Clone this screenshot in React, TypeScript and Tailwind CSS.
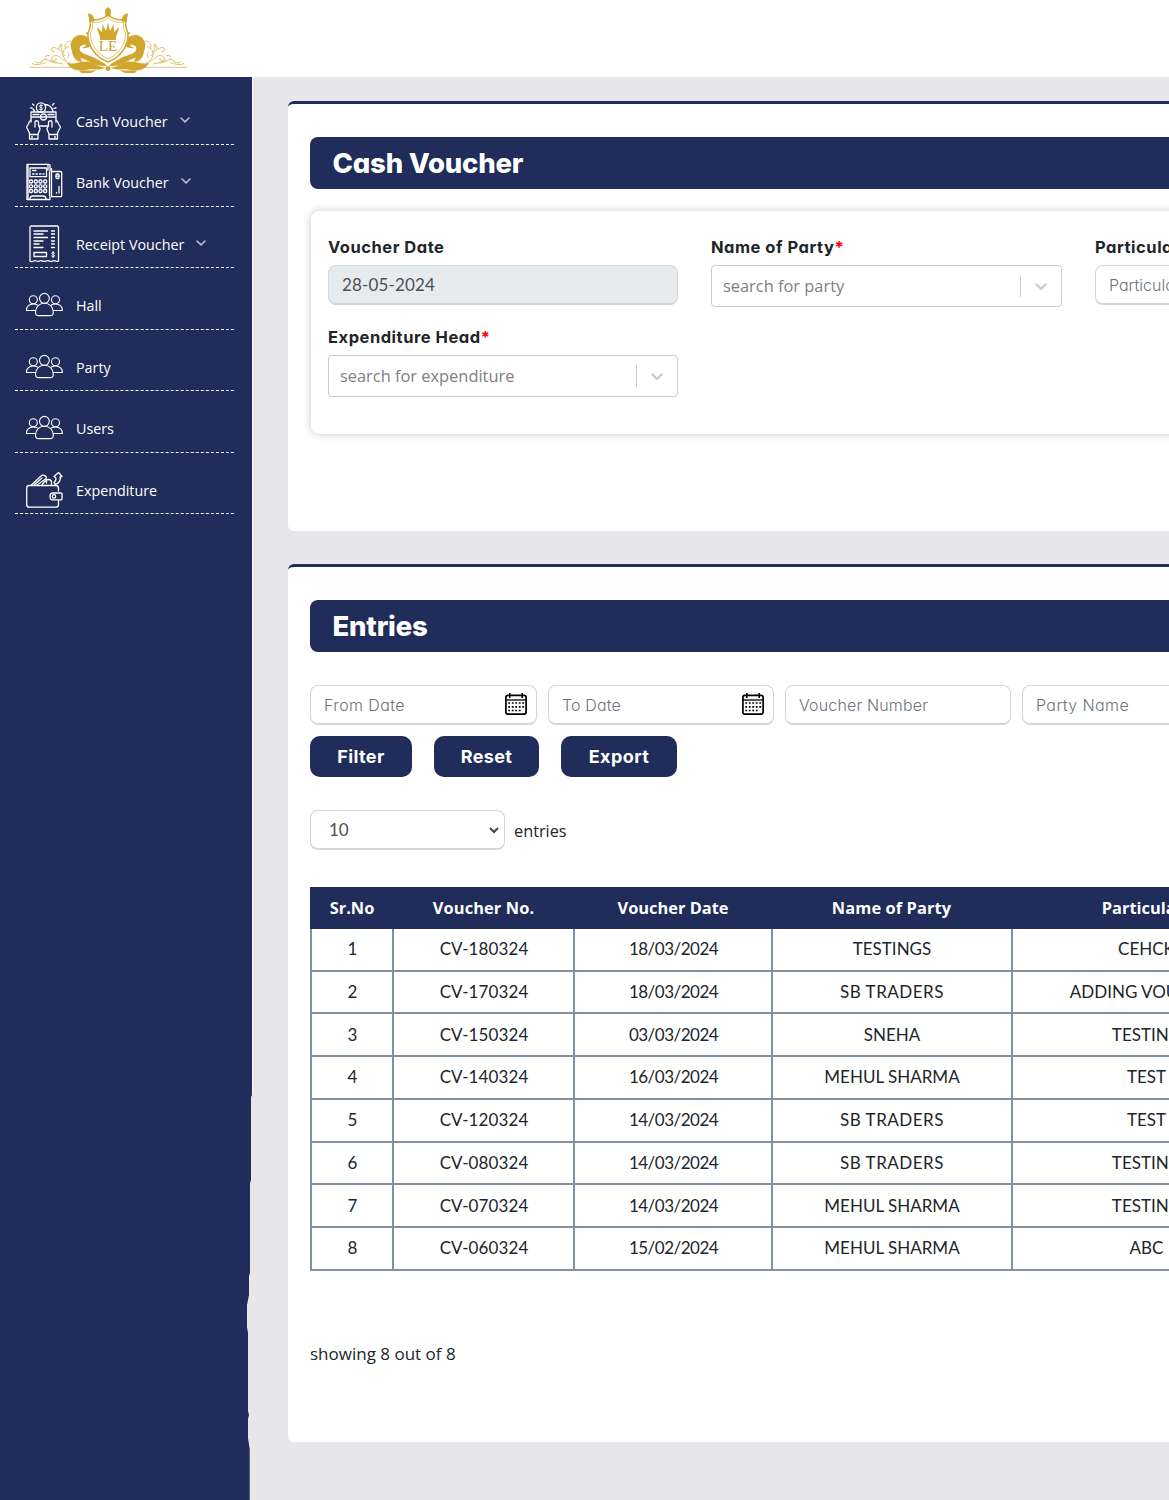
import type { ReactNode } from 'react'

const muli = "font-['Inter','Lato',sans-serif] [font-feature-settings:'cv11']"
const lato = "font-['Lato',sans-serif]"
const segoe = "font-['Open_Sans','Noto_Sans',sans-serif]"

function Logo() {
  const side = (
    <g>
      {/* large acanthus scroll */}
      <path
        d="M62 44 C61 37 56 32.500 50 33 C43 33.500 40 40 41 46 C42 53 49 55 56 58 C62 60.500 68 65 77 64 C74 60 69 59 65 56 C60 53 53 53 50 48.500 C48.500 45 52 42 56 43 C55 45 53 45 52 46 C56 47.500 59 44 62 44 Z"
        fill="#d0a72c"
      />
      <path d="M42 50 C46 51 51 54 52 60 C47 60 43 56 42 50 Z" fill="#d0a72c" />
      <path d="M37 61 C45 63 52 58 60 60 C66 61.500 69 65 75 65.500 C70 69 63 66.500 58 67.500 C53 69.500 42 70 37 61 Z" fill="#d0a72c" />
      <path d="M49 69.500 C54 67 60 70 66 67.500 C63 72 54 73 49 69.500 Z" fill="#d0a72c" />
      <g fill="none" stroke="#d0a72c" strokeWidth="1" opacity="0.7">
        <path d="M40 61 C32 59 31 54 26 53.500 C21 53.500 20 58 24 58.500 C26.500 58.500 27 56 25 56" />
        <path d="M37 59 C30 54 33 46 39 44.500 M36 47 C34 43 36 39 40 39 C42 39 42 42 40 42" />
        <path d="M35 54 C31 49 26 44 22 46 C20 48 23 51 25 49" />
        <path d="M27 61 C20 61 17 56 13 58 C10 60 14 63 15.500 60.500 M13 58 C10 62 6 61 5 59.500" />
        <path d="M33 50 C30 46 32 43 30 41 M20 54 C16 52 13 56 17 57.500 M29 47 C28 43 32 42 33 44" />
        <path d="M33 62 C28 61 24 60 20 58.500 M12 61.500 C9 63 5 63 2 61.500 M37 56 C40 54 39 50 37 50" />
      </g>
    </g>
  )
  return (
    <svg width="160" height="68" viewBox="0 0 160 68" className="block">
      <g transform="translate(0,-3)">
        {side}
        <g transform="translate(156,0) scale(-1,1)">{side}</g>
        <path d="M-1 65.300 H44 M112 65.300 H157" stroke="#d0a72c" strokeWidth="0.8" opacity="0.8" />
        <path
          d="M60 17 C66 19 74 17 78 13 C82 17 90 19 96 17 C95 23 96 27 98 31 C99 43 91 55 78 60 C65 55 57 43 58 31 C60 27 61 23 60 17 Z"
          fill="#fff"
          stroke="#d0a72c"
          strokeWidth="1.600"
        />
        <path
          d="M62.500 20 C68 21 74 19.500 78 16 C82 19.500 88 21 93.500 20 C93 25 94 28 95.500 31 C96 42 89 52 78 57 C67 52 60 42 60.500 31 C62 28 63 25 62.500 20 Z"
          fill="none"
          stroke="#d0a72c"
          strokeWidth="0.700"
        />
        <path d="M76 14 L75.500 8.500 C76 5 80 5 80.500 8.500 L80 14 Z M58.500 12 C61.500 11.500 64 15 64 19 L60 19.500 Z M97.500 12 C94.500 11.500 92 15 92 19 L96 19.500 Z" fill="#d0a72c" stroke="#d0a72c" />
        <path d="M70 35 L66.500 25 L72 30 L72.500 22.500 L76 29 L78 20.500 L80 29 L83.500 22.500 L84 30 L89.500 25 L86 35 Z M70 35 H86 V38 H70 Z" fill="#d0a72c" />
        <circle cx="78" cy="66.500" r="2.500" fill="#d0a72c" />
        <circle cx="57" cy="31" r="1" fill="#d0a72c" />
        <circle cx="99" cy="31" r="1" fill="#d0a72c" />
        <text x="78" y="48.500" textAnchor="middle" fontFamily="Liberation Serif" fontSize="15" fill="#c9a02a">
          LE
        </text>
      </g>
    </svg>
  )
}

const icon = {
  width: 38,
  height: 38,
  viewBox: '0 0 38 38',
  fill: 'none',
  stroke: '#fff',
  strokeWidth: 1.3,
  strokeLinecap: 'round' as const,
  strokeLinejoin: 'round' as const,
}

const CashIcon = () => (
  <svg {...icon}>
    <circle cx="16" cy="5.500" r="4.600" />
    <path d="M17.700 3.800 C16.500 2.800 14.300 3.200 14.500 4.500 C14.700 5.700 17.500 5.300 17.600 6.700 C17.600 8 15.300 8.200 14.300 7.200 M16 2.500 V8.600" strokeWidth="0.900" />
    <path d="M19.500 2.500 C24 2.500 27 5 28 9.500 M8 7 L9.500 9 M7.500 2 L9 3.200 M27.500 3 L29 1.500 M29 6.500 L31 6 M7 6 L5.500 5.800" />
    <path d="M6 10 H31 V15 H6 Z M8 12.500 H14 M23 12.500 H29 M6 15 H15.500 M21.500 15 H31 M6 15 V20 M31 15 V20" />
    <circle cx="18.500" cy="15" r="3" />
    <path d="M14 24 H23" />
    <path d="M6 18 C4 19 4 20 3.500 22 L1.500 25 L4.500 31 V37 H13 V32.500 C13 30.500 15 29 15 26.500 L13.500 23.500 V20 C13 18.300 10 18.300 10 20 V25" />
    <path d="M31 18 C33 19 33 20 33.500 22 L35.500 25 L32.500 31 V37 H24 V32.500 C24 30.500 22 29 22 26.500 L23.500 23.500 V20 C24 18.300 27 18.300 27 20 V25" />
    <path d="M5 32.500 H12.500 M24.500 32.500 H32 M6.500 35 H7.500 M29.500 35 H30.500" />
  </svg>
)

const BankIcon = () => (
  <svg {...icon}>
    <path d="M25 8 V2.500 C25 1.800 24.500 1.300 23.800 1.300 H2 V36.500 H25 V34" />
    <path d="M5 5 H21.500 V13.700 H5 Z M7.500 7.500 H11 M7.500 11 H9 M11 11 H12.500 M14.500 11 H16 M18 11 H19 M3 1.500 V36 M23 2 V7" />
    {[17.5, 22.3, 27].map((y) =>
      [4.500, 9.300, 14, 18.700].map((x) => <rect key={`${x}-${y}`} x={x} y={y - 0.5} width="3" height="3" rx="1" />),
    )}
    <path d="M5 36 C5 33.500 6 33 8 33 H18 C20 33 21 33.500 21 36" />
    <path d="M26.500 8.500 H35.500 C36.300 8.500 36.700 9 36.700 9.700 V32.500 C36.700 33.300 36.200 33.700 35.500 33.700 H26.500 Z M24.500 9 V33 M26.500 5.500 V8" />
    <rect x="31" y="11" width="3" height="4.500" rx="1" />
    <path d="M31 13.200 H34 M34 23.500 V30 M31.500 29.500 V30" />
  </svg>
)

const ReceiptIcon = () => (
  <svg {...icon}>
    <path d="M5 36 V2.500 C5 1.500 5.500 1 6.500 1 H32 C33 1 33.500 1.500 33.500 2.500 V36 C31.500 37.500 30 34.500 27.500 36 C25.500 37.500 23.500 34.500 21 36 C19 37.500 17 34.500 14.500 36 C12.500 37.500 10.500 34.500 8.500 36 C7 37 6 37 5 36 Z" />
    <path d="M9 6 H22.500 M9 9 H18 M9 12.500 H22.500 M9 16 H18 M9 19 H14 M9 22.500 H18" />
    <path d="M26.500 6 H29.500 M26.500 9 H29.500 M26.500 12.500 H29.500 M26.500 16 H29.500 M26.500 19 H29.500 M26.500 22.500 H29.500" />
    <rect x="9" y="27.500" width="12.500" height="4" />
    <path d="M29.500 28 C28.500 27 26.500 27.200 26.700 28.500 C27 29.700 29.500 29.300 29.600 30.700 C29.500 32 27.300 32 26.500 31 M28.100 26.500 V32.700" strokeWidth="1" />
  </svg>
)

const PeopleIcon = () => (
  <svg {...icon} strokeWidth={1.1}>
    <circle cx="19.400" cy="12.300" r="4.900" />
    <circle cx="8.300" cy="13.800" r="4" />
    <circle cx="30.500" cy="13.800" r="4" />
    <path d="M10.500 26.500 C10.500 20.500 14.500 17.300 19.400 17.300 C24.300 17.300 28.300 20.500 28.300 26.500 C28.300 28.600 27.500 29.600 25 29.600 H13.800 C11.300 29.600 10.500 28.600 10.500 26.500 Z" />
    <path d="M10.500 24.500 H1.500 C1.300 20.800 3.800 18 8.300 18 C10 18 11.300 18.300 12.400 19 M28.300 24.500 H37.300 C37.500 20.800 35 18 30.500 18 C28.800 18 27.500 18.300 26.400 19" />
  </svg>
)

const WalletIcon = () => (
  <svg {...icon}>
    <path d="M33.500 20 V17.500 C33.500 16 32.500 14.500 31 14.500 H4 C2.500 14.500 1.700 15.500 1.700 17 V33.500 C1.700 35.200 2.700 36.200 4.300 36.200 H31 C32.700 36.200 33.500 35.200 33.500 33.500 V29.500" />
    <path d="M28 22 H36 C36.700 22 37 22.400 37 23 V27.700 C37 28.500 36.700 28.900 36 28.900 H28 C26 28.900 25 27.400 25 25.400 C25 23.400 26 22 28 22 Z" />
    <circle cx="29" cy="25.400" r="1.700" />
    <path d="M6.500 14 L16 5 C17.500 3.500 20.500 4 21.500 6.500 L20.500 8 L12 14 M17 14 C18 12 21 8.500 23.500 8.500 C25.500 8.500 26.500 10 26.500 11.500 V14 M9.500 13.500 L17 7 M21.500 8.500 V12" />
    <path d="M30.500 13.500 L29 11.500 C30.500 10 31.500 8 30.500 6.500 L29 5.500 L33.500 1.500 L37 5.500 L35 6 C36 8.500 34.500 12 30.500 13.500 Z" />
  </svg>
)

const Chevron = () => (
  <svg width="10" height="6" viewBox="0 0 10 6" fill="none" stroke="#b9bccb" strokeWidth="1.600" strokeLinecap="round" className="relative -top-px">
    <path d="M1 1 L5 4.800 L9 1" />
  </svg>
)

const menu: { label: string; icon: ReactNode; open?: boolean }[] = [
  { label: 'Cash Voucher', icon: <CashIcon />, open: true },
  { label: 'Bank Voucher', icon: <BankIcon />, open: true },
  { label: 'Receipt Voucher', icon: <ReceiptIcon />, open: true },
  { label: 'Hall', icon: <PeopleIcon /> },
  { label: 'Party', icon: <PeopleIcon /> },
  { label: 'Users', icon: <PeopleIcon /> },
  { label: 'Expenditure', icon: <WalletIcon /> },
]

function Sidebar() {
  return (
    <aside className="relative h-[1423px] w-[253px] shrink-0">
      <div className="absolute top-0 right-0 h-[1018px] w-px bg-white" />
      <nav className="h-full w-[252px] bg-[#202c59] pt-[6.8px] pr-[18px] pl-[15px] [clip-path:polygon(0_0,252px_0,252px_1018px,251px_1020px,251px_1103px,250px_1106px,250px_1196px,249px_1199px,249px_1218px,247px_1228px,247px_1250px,248px_1256px,248px_1334px,249px_1338px,248px_1342px,248px_1361px,249.7px_1372px,249.7px_1423px,0_1423px)]">
        {menu.map((m) => (
          <a key={m.label} className="flex h-[61.5px] items-center border-b border-dashed border-white pt-[13px] pl-[10px]">
            {m.icon}
            <span className={`ml-[13px] pt-[3px] text-[14.300px] leading-none text-white ${segoe}`}>{m.label}</span>
            {m.open && (
              <span className="ml-[12px]">
                <Chevron />
              </span>
            )}
          </a>
        ))}
      </nav>
    </aside>
  )
}

function Card({ title, className, children }: { title: string; className: string; children: ReactNode }) {
  return (
    <section className={`rounded-md border-t-[3px] border-[#202c59] bg-white px-[22px] pt-[33px] ${className}`}>
      <h2 className={`flex h-[52px] items-center rounded-lg bg-[#202c59] pt-[2px] pl-[22.500px] text-[27.500px] font-extrabold tracking-[-0.2px] text-white ${muli}`}>
        {title}
      </h2>
      {children}
    </section>
  )
}

function Label({ children, required }: { children: string; required?: boolean }) {
  return (
    <div className={`h-[30px] text-[16.500px] leading-[24px] font-bold tracking-[0.52px] text-[#212529] ${muli}`}>
      {children}
      {required && <span className="text-[#ff0000]">*</span>}
    </div>
  )
}

const field = 'flex h-10 items-center rounded-lg border border-b-2 border-[#d3d6da] px-[13px]'

function SearchSelect({ text }: { text: string }) {
  return (
    <div className="flex h-[42px] items-center rounded border border-[#cccccc] pl-[11px]">
      <span className={`flex-1 pt-px text-[16.400px] text-[#808080] ${segoe}`}>{text}</span>
      <span className="h-[22px] w-px bg-[#cccccc]" />
      <svg width="20" height="20" viewBox="0 0 20 20" className="mx-[10px]" fill="#cccccc">
        <path d="M4.516 7.548c0.436-0.446 1.043-0.481 1.576 0l3.908 3.747 3.908-3.747c0.533-0.481 1.141-0.446 1.574 0 0.436 0.445 0.408 1.197 0 1.615-0.406 0.418-4.695 4.502-4.695 4.502-0.217 0.223-0.502 0.335-0.787 0.335s-0.570-0.112-0.789-0.335c0 0-4.287-4.084-4.695-4.502s-0.436-1.170 0-1.615z" />
      </svg>
    </div>
  )
}

function CalendarIcon() {
  return (
    <svg width="22" height="22" viewBox="0 0 22 22" fill="none" stroke="#000" strokeWidth="1.700" className="relative -top-px">
      <rect x="0.900" y="2.300" width="20.200" height="18.800" rx="2" />
      <path d="M1 7 H21" strokeWidth="1.300" />
      <path d="M4.800 0 V5 M17.200 0 V5" strokeWidth="1.600" />
      {[10, 13.8, 17.5].map((y) => (
        <path key={y} d={y === 17.5 ? `M3.300 ${y} H16` : `M3.300 ${y} H19.500`} strokeWidth="1.700" strokeDasharray="1.800 1.700" />
      ))}
    </svg>
  )
}

const columns = [
  { label: 'Sr.No', width: 'w-[82px]', head: 'pl-[2px]', cell: 'pl-px' },
  { label: 'Voucher No.', width: 'w-[181px]', head: 'pl-[2px] tracking-[0.1px]', cell: 'tracking-[0.1px] pl-px' },
  { label: 'Voucher Date', width: 'w-[198px]', head: 'pl-[2px]', cell: 'tracking-[-0.5px] pl-px' },
  { label: 'Name of Party', width: 'w-[240px]', head: 'pl-px tracking-[0.1px]', cell: '' },
  { label: 'Particulars', width: 'w-[269px]', head: 'pl-[2px]', cell: '' },
]

const rows = [
  ['1', 'CV-180324', '18/03/2024', 'TESTINGS', 'CEHCK'],
  ['2', 'CV-170324', '18/03/2024', 'SB TRADERS', 'ADDING VOUCHER'],
  ['3', 'CV-150324', '03/03/2024', 'SNEHA', 'TESTING'],
  ['4', 'CV-140324', '16/03/2024', 'MEHUL SHARMA', 'TEST'],
  ['5', 'CV-120324', '14/03/2024', 'SB TRADERS', 'TEST'],
  ['6', 'CV-080324', '14/03/2024', 'SB TRADERS', 'TESTING'],
  ['7', 'CV-070324', '14/03/2024', 'MEHUL SHARMA', 'TESTING'],
  ['8', 'CV-060324', '15/02/2024', 'MEHUL SHARMA', 'ABC'],
]

function Entries() {
  return (
    <Card title="Entries" className="mt-[33px] h-[878px]">
      <div className={`mt-[33px] flex gap-[11px] text-[16px] font-light tracking-[0.15px] text-[#6c757d] ${muli}`}>
        <div className={`${field} w-[227px] justify-between pr-[9px]! tracking-[0.4px]`}>
          From Date <CalendarIcon />
        </div>
        <div className={`${field} w-[226px] justify-between pr-[9px]!`}>
          To Date <CalendarIcon />
        </div>
        <div className={`${field} w-[226px]`}>Voucher Number</div>
        <div className={`${field} w-[226px] tracking-[0.4px]`}>Party Name</div>
      </div>
      <div className={`mt-[11px] flex gap-[22px] text-[18px] font-bold tracking-[0.4px] text-white ${muli}`}>
        <button className="h-[41px] w-[102px] rounded-[10px] bg-[#202c59]">Filter</button>
        <button className="h-[41px] w-[105px] rounded-[10px] bg-[#202c59]">Reset</button>
        <button className="h-[41px] w-[116px] rounded-[10px] bg-[#202c59]">Export</button>
      </div>
      <div className="mt-[33px] flex items-center">
        <div className={`${field} w-[195px] justify-between pt-px pr-[5px]! pl-[18px]! text-[17px] text-[#495057] ${lato}`}>
          10
          <svg width="10" height="7" viewBox="0 0 10 7" fill="none" stroke="#41464b" strokeWidth="2">
            <path d="M1 1 L5 5 L9 1" />
          </svg>
        </div>
        <span className={`ml-[9px] pt-[2px] text-[16.300px] text-[#212529] ${segoe}`}>entries</span>
      </div>
      <div className="mt-[37px] w-[972px]">
        <div className={`flex h-[41.9px] items-center bg-[#202c59] pt-px text-center text-[16.400px] font-bold text-white ${segoe}`}>
          {columns.map((c) => (
            <div key={c.label} className={`${c.width} ${c.head}`}>
              {c.label}
            </div>
          ))}
        </div>
        {rows.map((r) => (
          <div key={r[0]} className={`flex h-[42.75px] border-r-2 border-b-2 border-[#8091a2] text-[17px] text-[#212529] ${lato}`}>
            {r.map((v, i) => (
              <div key={i} className={`flex items-center justify-center border-l-2 border-[#8091a2] pb-px ${columns[i].width} ${columns[i].cell} ${v === 'SB TRADERS' ? 'tracking-[0.5px]' : ''}`}>
                {v}
              </div>
            ))}
          </div>
        ))}
      </div>
      <p className={`mt-[70px] text-[17px] leading-[26px] text-[#212529] ${segoe}`}>showing 8 out of 8</p>
    </Card>
  )
}

export default function App() {
  return (
    <div className="h-[1500px] w-full overflow-hidden bg-[#e7e6eb]">
      <header className="h-[77px] bg-white pt-[5px] pl-[30px]">
        <Logo />
      </header>
      <div className="flex">
        <Sidebar />
        <main className="w-[1600px] shrink-0 pt-6 pl-[35px]">
          <Card title="Cash Voucher" className="h-[430px]">
            <div className="mt-[22px] ml-px grid h-[223px] grid-cols-[350px_351px_350px] content-start gap-x-[33px] gap-y-[20px] rounded-lg bg-white pt-[24px] pl-[17px] shadow-[0_0_8px_rgba(0,0,0,0.22)]">
              <div className="h-[70px]">
                <Label>Voucher Date</Label>
                <div className={`${field} bg-[#e8ebee] text-[17px] tracking-[0.15px] text-[#495057] ${lato}`}>28-05-2024</div>
              </div>
              <div className="h-[70px]">
                <Label required>Name of Party</Label>
                <SearchSelect text="search for party" />
              </div>
              <div className="h-[70px]">
                <Label>Particulars</Label>
                <div className={`${field} text-[16px] font-light text-[#6c757d] ${muli}`}>Particulars</div>
              </div>
              <div className="h-[70px]">
                <Label required>Expenditure Head</Label>
                <SearchSelect text="search for expenditure" />
              </div>
            </div>
          </Card>
          <Entries />
        </main>
      </div>
    </div>
  )
}
